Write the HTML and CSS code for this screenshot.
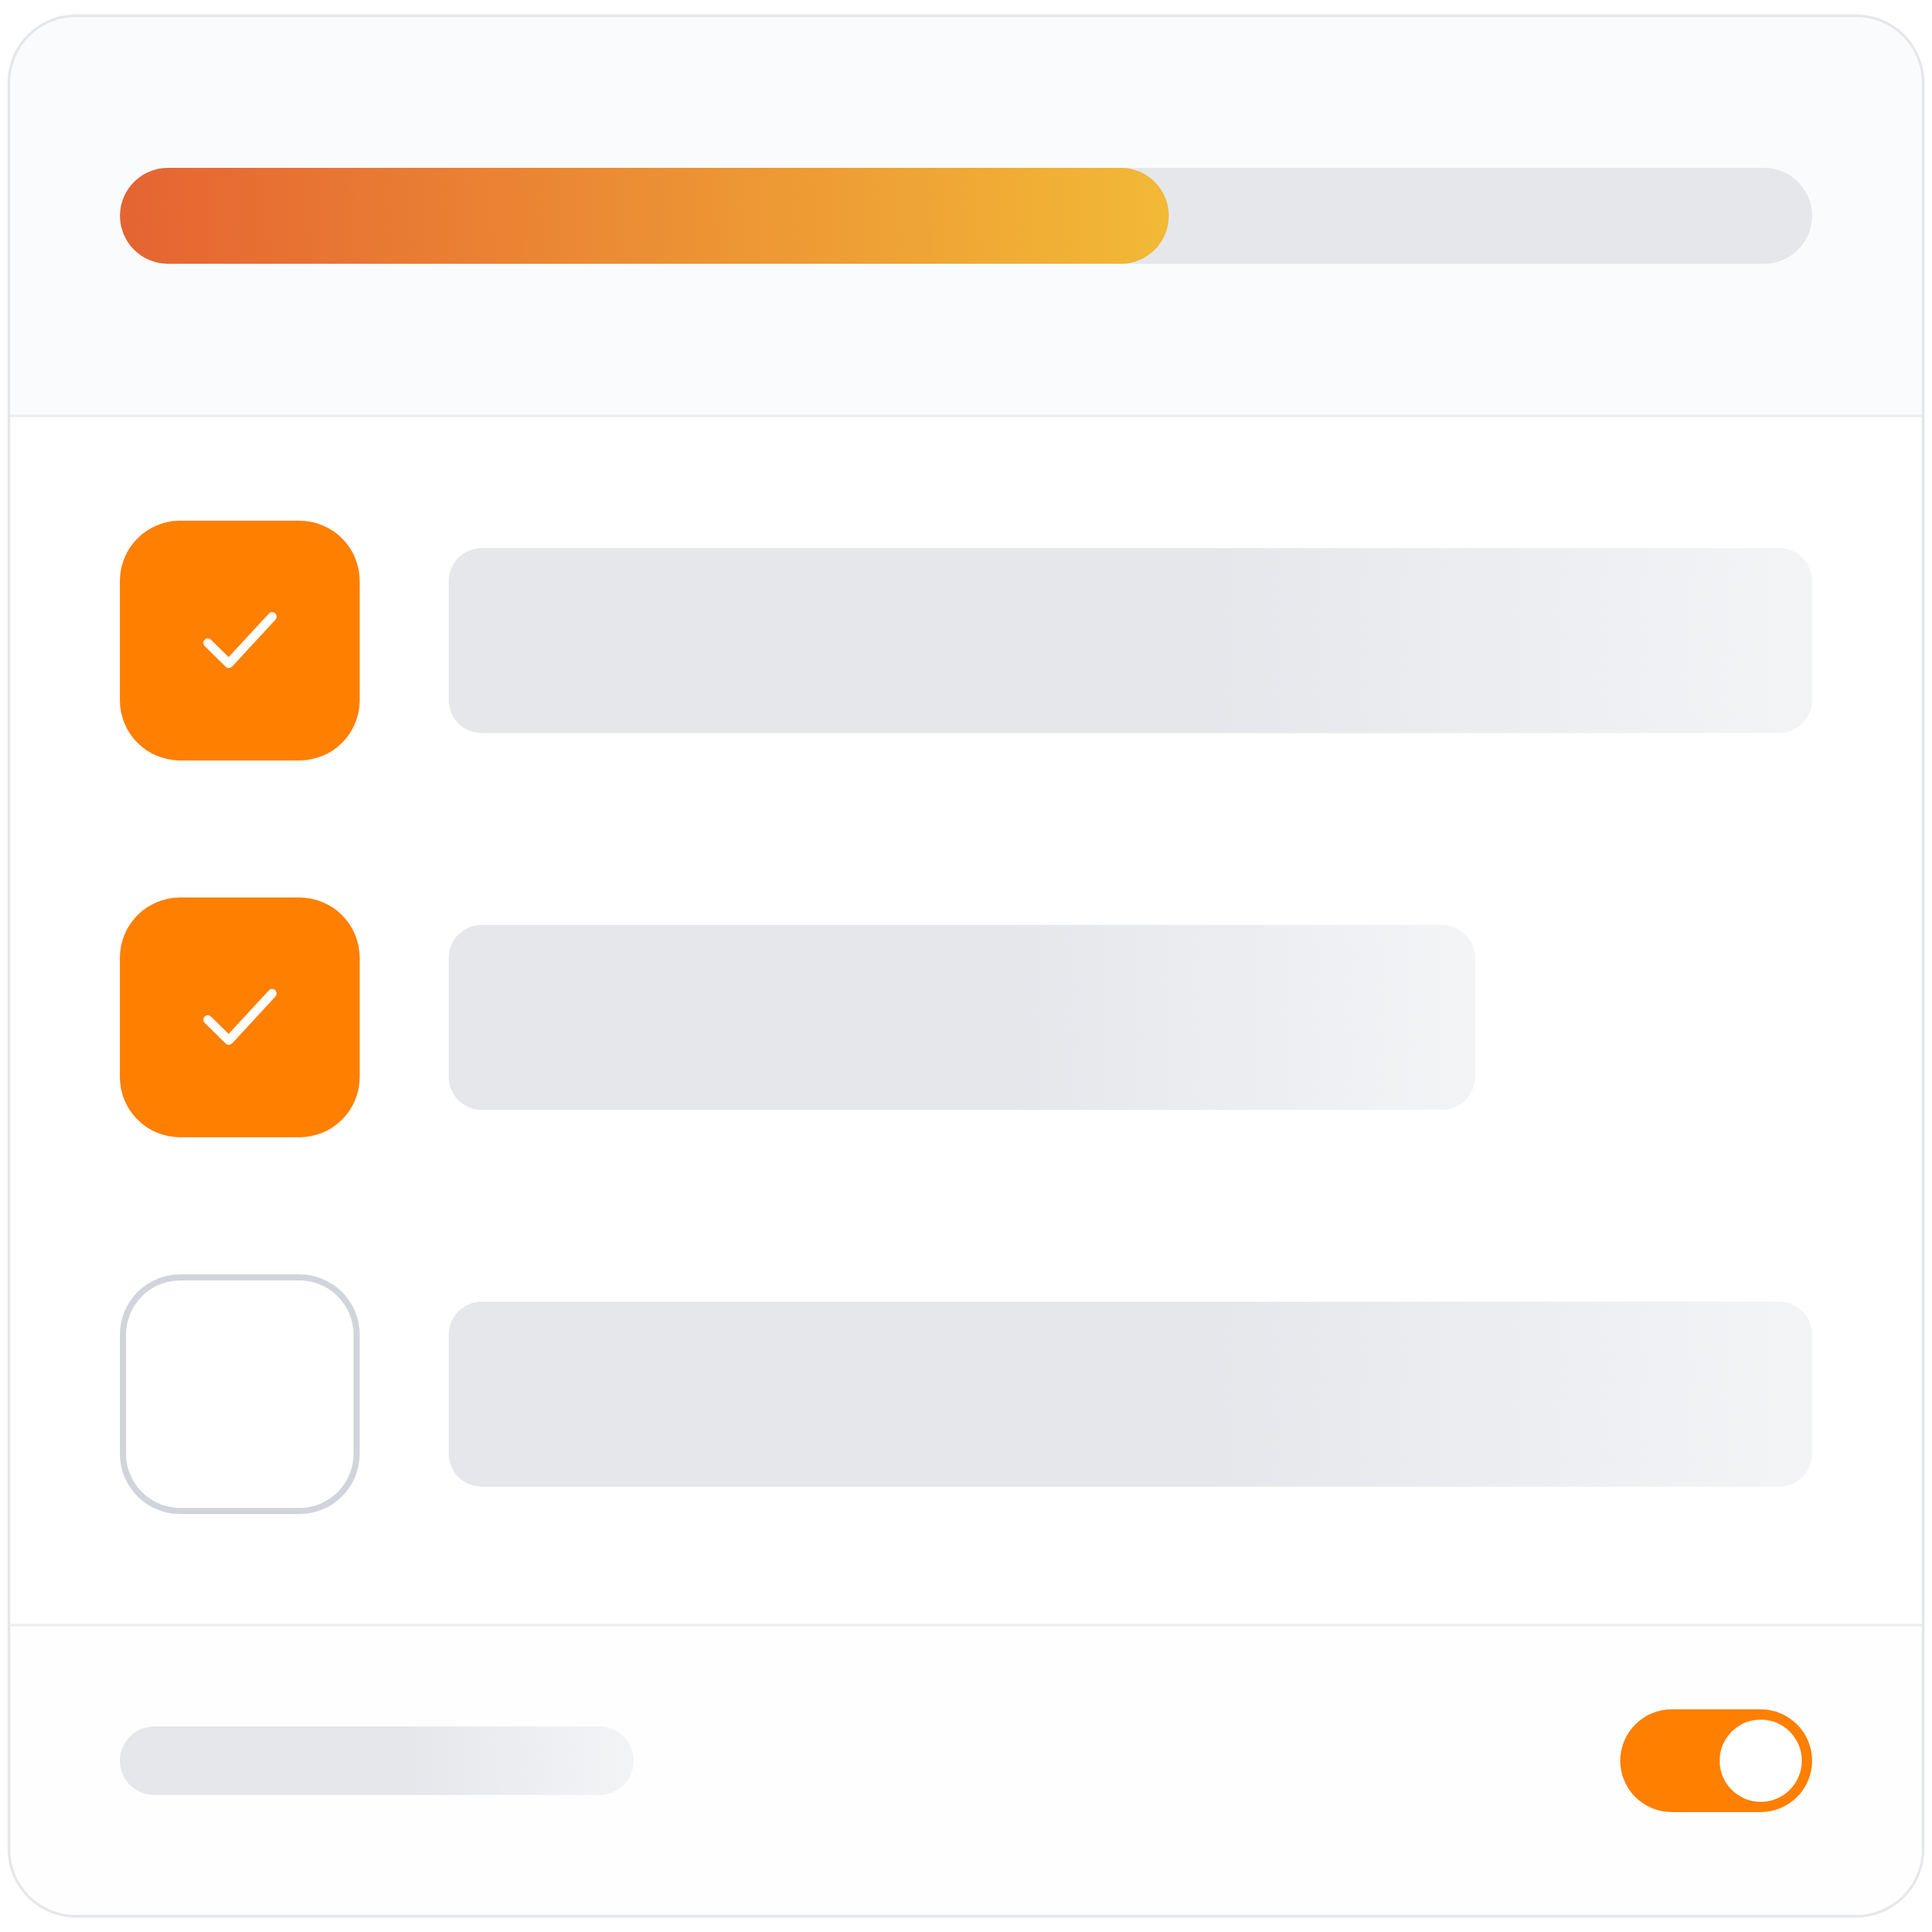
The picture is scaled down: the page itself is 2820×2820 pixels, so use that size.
FILE: index.html
```html
<!DOCTYPE html>
<html lang="en">
<head>
<meta charset="utf-8">
<title>Checklist</title>
<link rel="stylesheet" href="styles.css">
</head>
<body>
<div class="card">
  <header class="card-header">
    <div class="progress">
      <div class="progress-fill" style="width: 62%"></div>
    </div>
  </header>
  <main class="card-main">
    <div class="row">
      <div class="checkbox checked">
        <svg class="check" viewBox="0 0 350 350"><polyline points="128.3,178.3 159,208.5 222.3,140" /></svg>
      </div>
      <div class="line-wrap"><div class="line" style="width: 100%"></div></div>
    </div>
    <div class="row">
      <div class="checkbox checked">
        <svg class="check" viewBox="0 0 350 350"><polyline points="128.3,178.3 159,208.5 222.3,140" /></svg>
      </div>
      <div class="line-wrap"><div class="line" style="width: 75.3%"></div></div>
    </div>
    <div class="row">
      <div class="checkbox"></div>
      <div class="line-wrap"><div class="line" style="width: 100%"></div></div>
    </div>
  </main>
  <footer class="card-footer">
    <div class="pill"></div>
    <div class="toggle"><div class="knob"></div></div>
  </footer>
</div>
</body>
</html>
```

FILE: styles.css
```css
html, body {
  margin: 0;
  padding: 0;
  background: #ffffff;
}

body {
  width: 2820px;
  height: 2820px;
  display: flex;
  align-items: center;
  justify-content: center;
  font-family: "Liberation Sans", Arial, sans-serif;
}

.card {
  width: 2798px;
  height: 2778px;
  box-sizing: border-box;
  border: 4px solid #e5e7eb;
  border-radius: 100px;
  overflow: hidden;
  background: #ffffff;
  display: flex;
  flex-direction: column;
}

.card-header {
  background: #fafbfc;
  padding: 220px 160px;
  border-bottom: 4px solid #eeeff0;
}

.progress {
  height: 140px;
  border-radius: 70px;
  background: #e5e7eb;
  overflow: hidden;
}

.progress-fill {
  height: 100%;
  border-radius: 70px;
  background: linear-gradient(to right, #e56432, #f2b936);
}

.card-main {
  padding: 151px 160px 160px;
  display: flex;
  flex-direction: column;
  gap: 200px;
  border-bottom: 4px solid #eeeff0;
}

.row {
  display: flex;
  align-items: center;
  gap: 130px;
}

.checkbox {
  width: 350px;
  height: 350px;
  flex: none;
  box-sizing: border-box;
  border-radius: 88px;
  border: 9px solid #d1d5db;
  background: #ffffff;
}

.checkbox.checked {
  border: none;
  background: #ff7f00;
}

.check {
  display: block;
  width: 350px;
  height: 350px;
}

.check polyline {
  fill: none;
  stroke: #ffffff;
  stroke-width: 13;
  stroke-linecap: round;
  stroke-linejoin: round;
}

.line-wrap {
  flex: 1;
  min-width: 0;
}

.line {
  height: 270px;
  border-radius: 48px;
  background: linear-gradient(to right, #e5e7eb 55%, #f3f4f6 100%);
}

.card-footer {
  flex: 1;
  padding: 121px 160px 150px;
  display: flex;
  align-items: center;
  justify-content: space-between;
  background: #fefefe;
}

.pill {
  width: 750px;
  height: 100px;
  border-radius: 50px;
  background: linear-gradient(to right, #e5e7eb 55%, #f3f4f6 100%);
}

.toggle {
  width: 280px;
  height: 150px;
  box-sizing: border-box;
  padding: 15px;
  border-radius: 75px;
  background: #ff7f00;
  display: flex;
  justify-content: flex-end;
}

.knob {
  width: 120px;
  height: 120px;
  border-radius: 50%;
  background: #ffffff;
}
```
